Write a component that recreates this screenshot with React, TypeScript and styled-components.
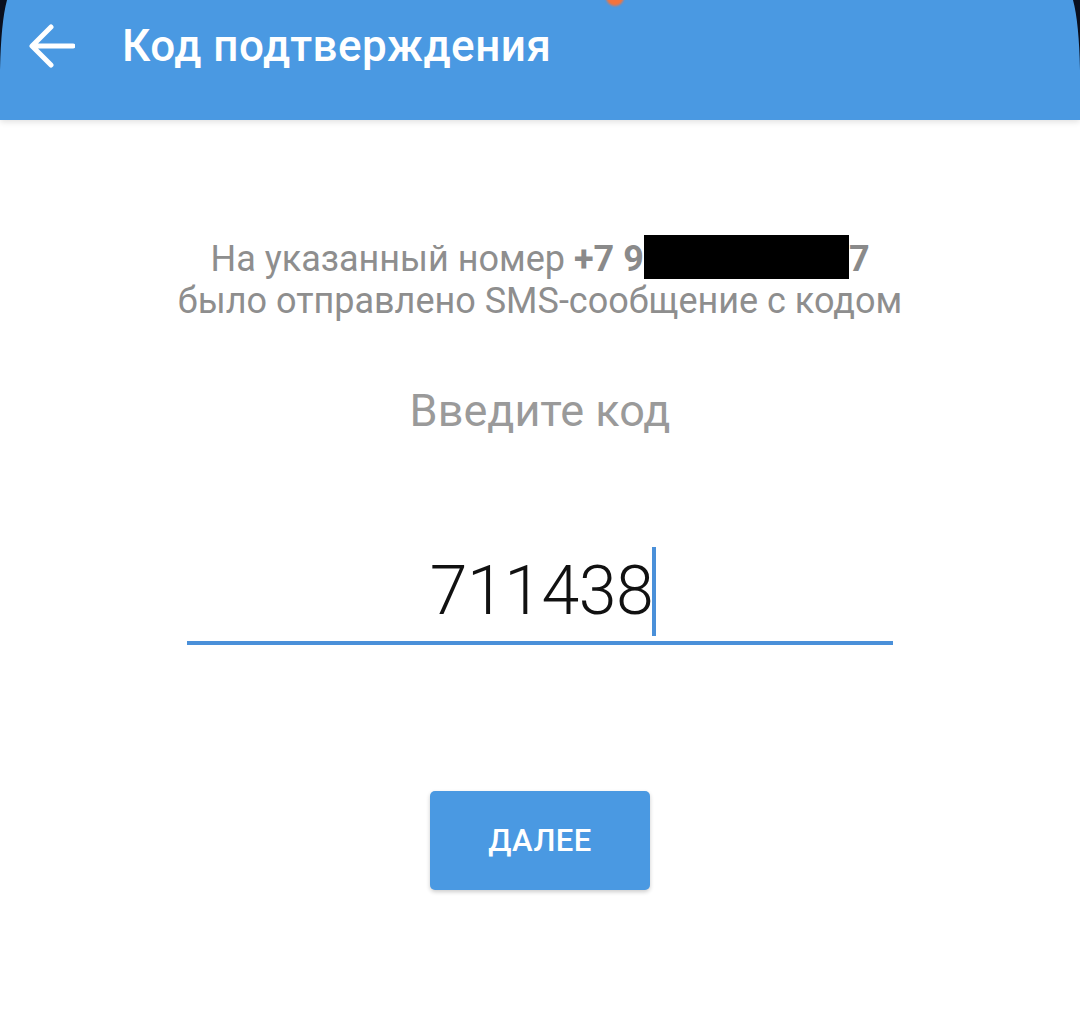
import React from "react";
import styled, { createGlobalStyle } from "styled-components";

const Global = createGlobalStyle`
  html, body { margin: 0; padding: 0; background: #ffffff; }
  body { font-family: Roboto, "Noto Sans", "Liberation Sans", sans-serif; }
  * { box-sizing: border-box; }
`;

const Screen = styled.div`
  position: relative;
  width: 1080px;
  height: 1020px;
  background: #ffffff;
  overflow: hidden;
  display: flex;
  flex-direction: column;
`;

const AppBar = styled.header`
  position: relative;
  height: 120px;
  background: #4a99e2;
  display: flex;
  align-items: flex-start;
  padding: 22px 0 0 26px;
  box-shadow: 0 2px 6px rgba(0, 0, 0, 0.12);
  z-index: 1;
`;

const BackButton = styled.button`
  width: 50px;
  height: 48px;
  padding: 0;
  border: none;
  background: transparent;
  display: flex;
  align-items: center;
  justify-content: center;
  cursor: pointer;
`;

const Title = styled.h1`
  margin: -1px 0 0 46px;
  color: #ffffff;
  font-family: Roboto, "Noto Sans", sans-serif;
  font-weight: 500;
  font-size: 44px;
  line-height: 50px;
  letter-spacing: 0.5px;
`;

const CornerMask = styled.svg<{ $side: "left" | "right" }>`
  position: absolute;
  top: 0;
  ${(p) => (p.$side === "left" ? "left: 0;" : "right: 0;")}
  width: 12px;
  height: 70px;
  z-index: 3;
`;

const StatusDot = styled.div`
  position: absolute;
  top: -12px;
  left: 606px;
  width: 18px;
  height: 18px;
  border-radius: 50%;
  background: #f4733c;
  filter: blur(1px);
  z-index: 3;
`;

const Content = styled.main`
  flex: 1;
  display: flex;
  flex-direction: column;
  align-items: center;
`;

const Info = styled.p`
  margin: 115px 0 0;
  text-align: center;
  color: #8e8e8e;
  font-size: 36px;
  line-height: 42px;
  letter-spacing: 0;
`;

const Phone = styled.b`
  font-weight: 700;
  color: #8a8a8a;
`;

const Redacted = styled.span`
  display: inline-block;
  width: 205px;
  height: 44px;
  background: #000000;
  vertical-align: -8px;
`;

const Prompt = styled.div`
  margin-top: 64px;
  color: #9a9a9a;
  font-size: 45px;
  line-height: 50px;
`;

const CodeField = styled.div`
  margin-top: 108px;
  width: 706px;
  height: 101px;
  border-bottom: 4px solid #4a90d9;
  display: flex;
  align-items: flex-start;
  justify-content: center;
  padding-top: 3px;
`;

const CodeText = styled.span`
  font-family: Roboto, "Noto Sans", sans-serif;
  font-weight: 300;
  font-size: 68px;
  line-height: 88px;
  color: #111111;
  letter-spacing: -0.5px;
  margin-left: 6px;
`;

const Caret = styled.span`
  display: inline-block;
  width: 4px;
  height: 89px;
  background: #4a90d9;
  margin-left: -1px;
`;

const PrimaryButton = styled.button`
  margin-top: 146px;
  width: 220px;
  height: 99px;
  border: none;
  border-radius: 5px;
  background: #4a99e2;
  color: #ffffff;
  font-family: Roboto, "Noto Sans", sans-serif;
  font-weight: 500;
  font-size: 31px;
  letter-spacing: 0.5px;
  box-shadow: 0 2px 4px rgba(0, 0, 0, 0.2);
  cursor: pointer;
`;

export default function App() {
  return (
    <>
      <Global />
      <Screen>
        <CornerMask $side="left" viewBox="0 0 12 70" preserveAspectRatio="none">
          <path d="M0 0 H7 Q1 22 0 70 Z" fill="#0a0f1e" />
        </CornerMask>
        <CornerMask $side="right" viewBox="0 0 12 70" preserveAspectRatio="none">
          <path d="M12 0 H5 Q11 22 12 70 Z" fill="#0a0f1e" />
        </CornerMask>
        <StatusDot />
        <AppBar>
          <BackButton aria-label="Назад">
            <svg width="48" height="46" viewBox="0 0 48 46" fill="none">
              <path
                d="M46 23 H6 M24 4 L5 23 L24 42"
                stroke="#ffffff"
                strokeWidth="5"
                strokeLinecap="round"
                strokeLinejoin="round"
              />
            </svg>
          </BackButton>
          <Title>Код подтверждения</Title>
        </AppBar>
        <Content>
          <Info>
            На указанный номер <Phone>+7 9</Phone>
            <Redacted />
            <Phone>7</Phone>
            <br />
            было отправлено SMS-сообщение с кодом
          </Info>
          <Prompt>Введите код</Prompt>
          <CodeField>
            <CodeText>711438</CodeText>
            <Caret />
          </CodeField>
          <PrimaryButton>ДАЛЕЕ</PrimaryButton>
        </Content>
      </Screen>
    </>
  );
}
